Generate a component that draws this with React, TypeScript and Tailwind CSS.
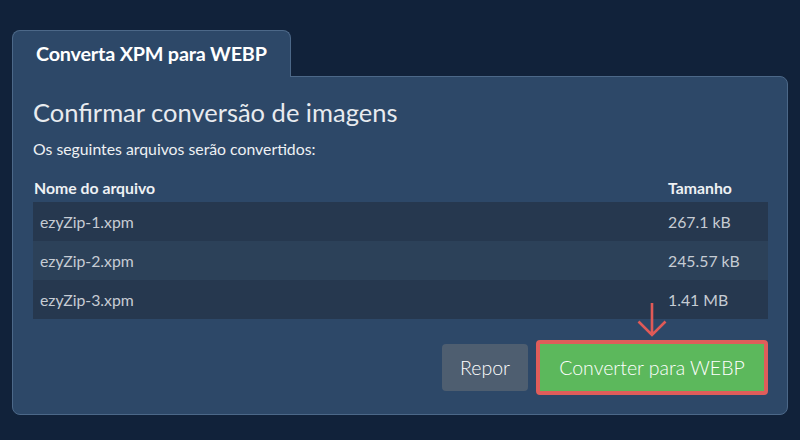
import React from "react";

const FILES = [
  { name: "ezyZip-1.xpm", size: "267.1 kB" },
  { name: "ezyZip-2.xpm", size: "245.57 kB" },
  { name: "ezyZip-3.xpm", size: "1.41 MB" },
];

export default function App() {
  return (
    <div
      className="w-[800px] h-[440px] bg-[#11223a] pt-[30px] pl-[12px] overflow-hidden"
      style={{ fontFamily: "Lato, 'Open Sans', sans-serif" }}
    >
      <div className="relative z-10 -mb-px w-[279px] h-[47px] rounded-t-lg border border-b-0 border-[#4c6888] bg-[#2d4868] pl-[23px] flex items-center">
        <span className="text-[19.8px] font-bold text-white tracking-[-0.2px]">Converta XPM para WEBP</span>
      </div>
      <div className="w-[776px] h-[339px] rounded-b-lg rounded-tr-lg border border-[#4c6888] bg-[#2d4868] pt-[19px] pl-[20px] pr-[19px]">
        <h1 className="text-[25.5px] leading-[32px] text-[#e8ebef]">Confirmar conversão de imagens</h1>
        <p className="mt-[11px] text-[15.8px] leading-[20px] text-[#eef1f4]">Os seguintes arquivos serão convertidos:</p>
        <div className="mt-[19px]">
          <div className="grid grid-cols-[634px_1fr] pl-[1px] pb-[4px] text-[15.8px] leading-[20px] font-bold text-[#eef1f4]">
            <div>Nome do arquivo</div>
            <div>Tamanho</div>
          </div>
          {FILES.map((f, i) => (
            <div
              key={f.name}
              className={
                "grid grid-cols-[628px_1fr] pl-[7px] h-[39px] items-center text-[15.8px] text-[#c6ccd4] " +
                (i % 2 === 0 ? "bg-[#26384f]" : "bg-[#2c4159]")
              }
            >
              <div>{f.name}</div>
              <div>{f.size}</div>
            </div>
          ))}
        </div>
        <div className="mt-[21px] flex items-center justify-end gap-[8px]">
          <button className="w-[86px] h-[47px] rounded-[4px] bg-[#4e5e70] text-[19.5px] font-light text-white">Repor</button>
          <div className="relative">
            <svg className="absolute left-[101px] top-[-38px]" width="30" height="36" viewBox="0 0 30 36" fill="none">
              <path d="M15 1 V33 M1.5 19.5 L15 33 L28.5 19.5" stroke="#e05a57" strokeWidth="2.6" />
            </svg>
            <button className="w-[232px] h-[55px] rounded-[4px] border-[4px] border-[#df5d5a] bg-[#5cb85c] text-[19.5px] font-light text-white">
              Converter para WEBP
            </button>
          </div>
        </div>
      </div>
    </div>
  );
}
